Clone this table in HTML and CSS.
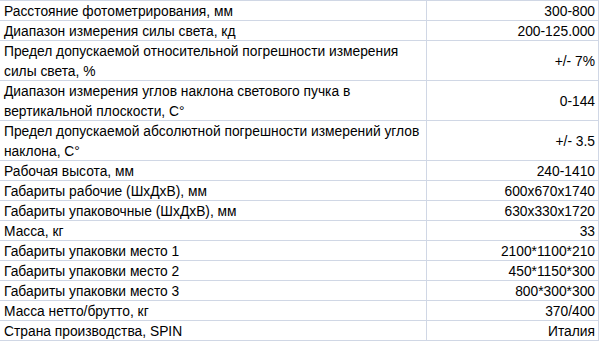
FILE: index.html
```html
<!DOCTYPE html>
<html lang="ru">
<head>
<meta charset="utf-8">
<title>Характеристики</title>
<link rel="stylesheet" href="styles.css">
</head>
<body>
<div class="sheet">
  <div class="cell label">Расстояние фотометрирования, мм</div>
  <div class="cell value">300-800</div>
  <div class="cell label">Диапазон измерения силы света, кд</div>
  <div class="cell value">200-125.000</div>
  <div class="cell label tall">Предел допускаемой относительной погрешности измерения<br>силы света, %</div>
  <div class="cell value tall">+/- 7%</div>
  <div class="cell label tall">Диапазон измерения углов наклона светового пучка в<br>вертикальной плоскости, С°</div>
  <div class="cell value tall">0-144</div>
  <div class="cell label tall">Предел допускаемой абсолютной погрешности измерений углов<br>наклона, С°</div>
  <div class="cell value tall">+/- 3.5</div>
  <div class="cell label">Рабочая высота, мм</div>
  <div class="cell value">240-1410</div>
  <div class="cell label">Габариты рабочие (ШхДхВ), мм</div>
  <div class="cell value">600x670x1740</div>
  <div class="cell label">Габариты упаковочные (ШхДхВ), мм</div>
  <div class="cell value">630x330x1720</div>
  <div class="cell label">Масса, кг</div>
  <div class="cell value">33</div>
  <div class="cell label">Габариты упаковки место 1</div>
  <div class="cell value">2100*1100*210</div>
  <div class="cell label">Габариты упаковки место 2</div>
  <div class="cell value">450*1150*300</div>
  <div class="cell label">Габариты упаковки место 3</div>
  <div class="cell value">800*300*300</div>
  <div class="cell label">Масса нетто/брутто, кг</div>
  <div class="cell value">370/400</div>
  <div class="cell label">Страна производства, SPIN</div>
  <div class="cell value">Италия</div>
</div>
</body>
</html>
```

FILE: styles.css
```css
html, body {
  margin: 0;
  padding: 0;
  background: #ffffff;
}

.sheet {
  display: grid;
  grid-template-columns: 426px 171px;
  grid-auto-rows: 19px;
  gap: 1px;
  padding: 1px 1px 1px 0;
  width: 598px;
  background: #d0d7e5;
  font-family: "Liberation Sans", Arial, sans-serif;
  font-size: 13.8px;
  color: #000000;
}

.cell {
  background: #ffffff;
  white-space: nowrap;
  line-height: 19px;
  padding-top: 1px;
  overflow: hidden;
}

.label {
  padding-left: 4px;
}

.tall {
  grid-row: span 2;
}

.label.tall {
  line-height: 20px;
}

.value {
  display: flex;
  align-items: center;
  justify-content: flex-end;
  padding-right: 3px;
  padding-top: 2px;
}
```
